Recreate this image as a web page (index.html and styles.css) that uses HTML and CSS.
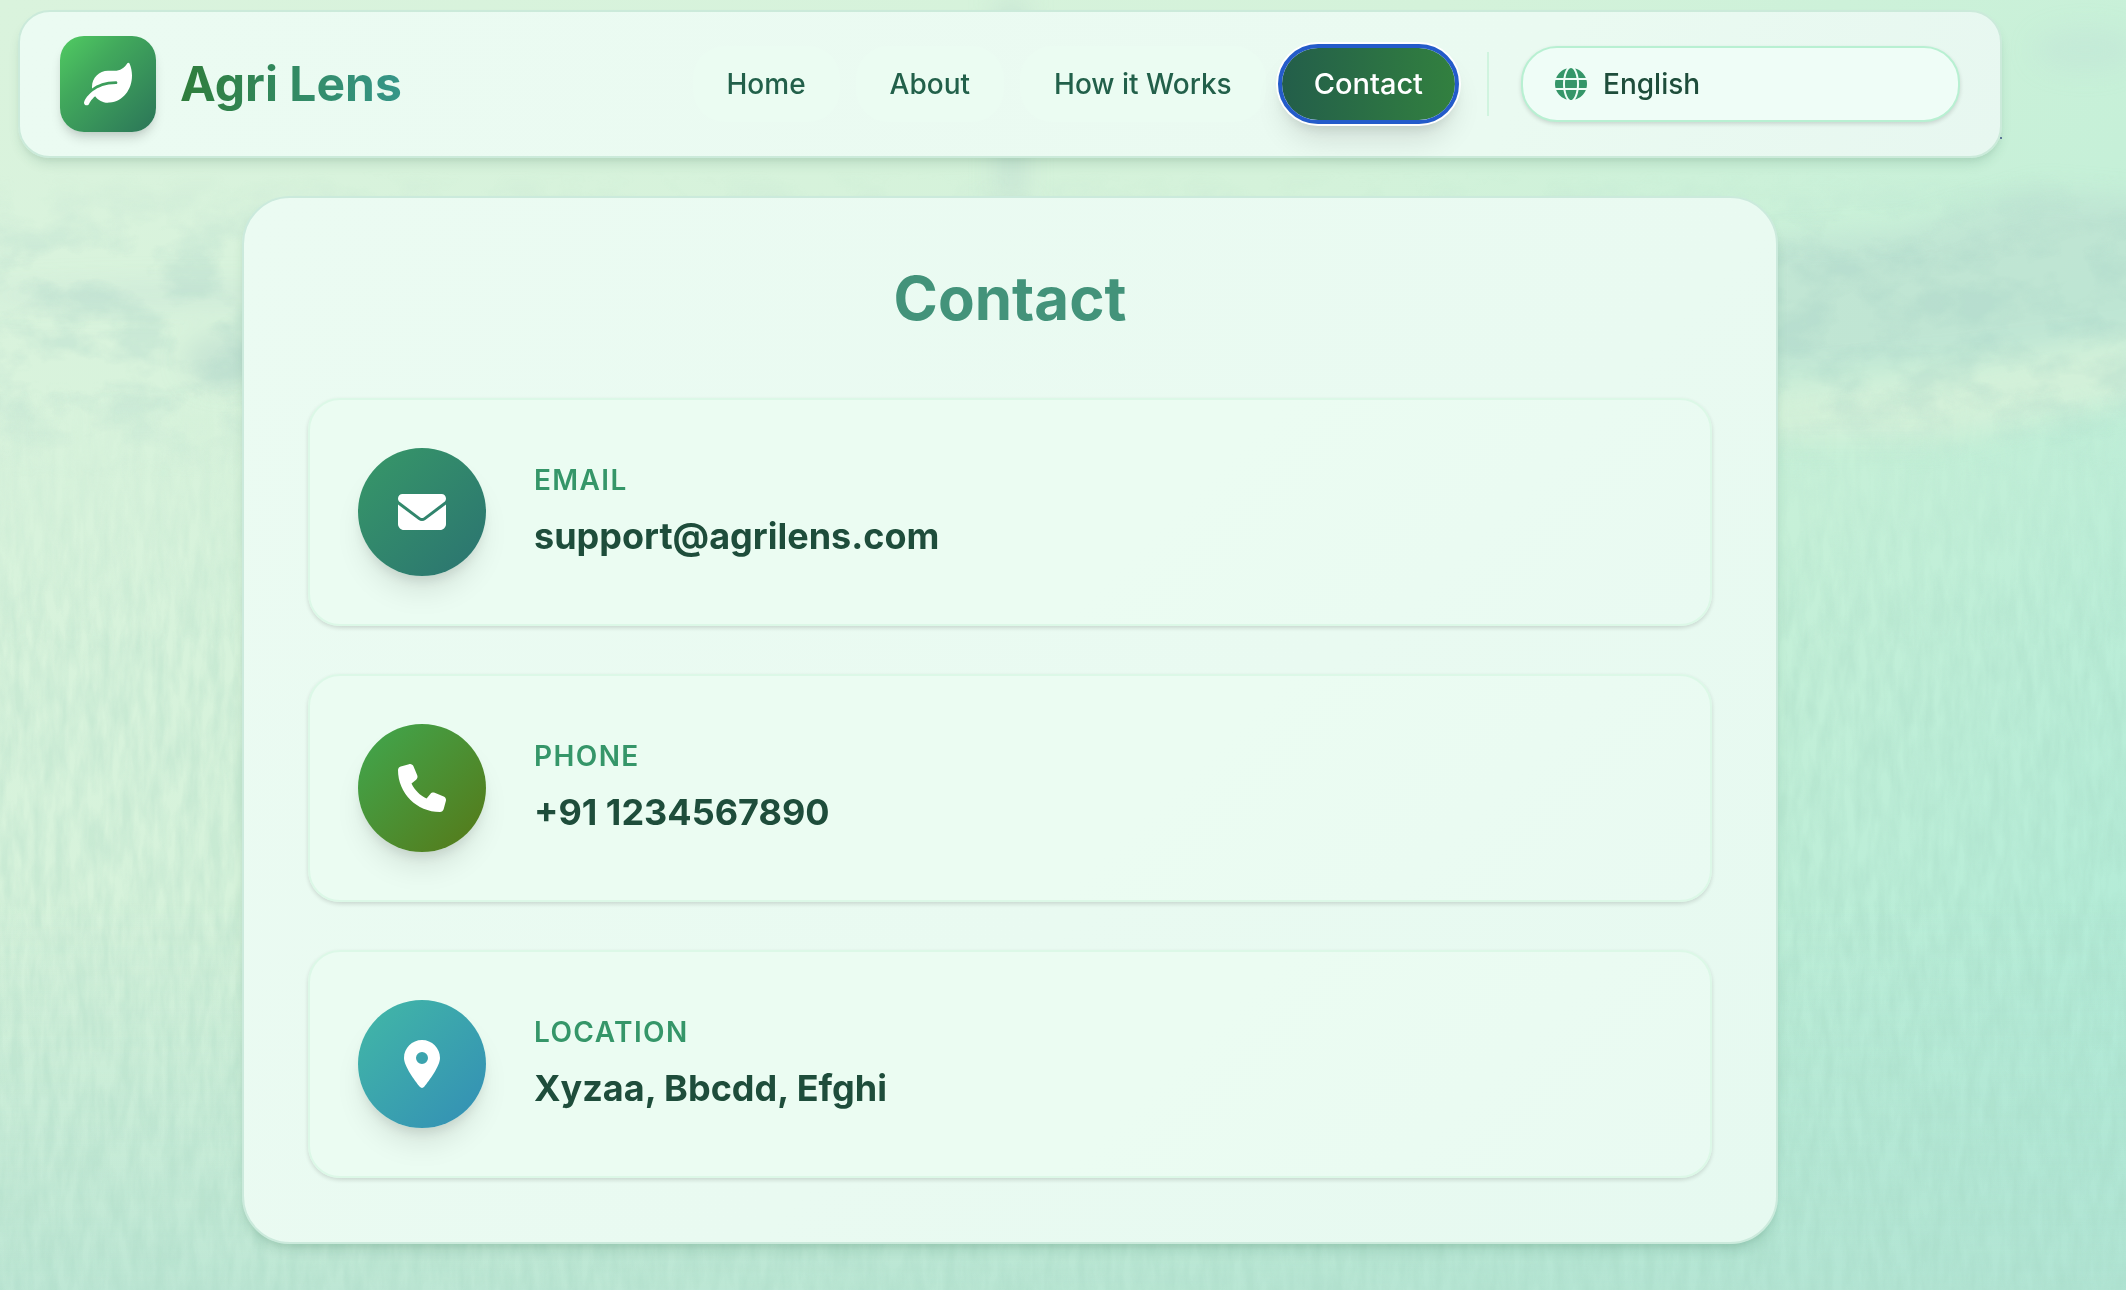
FILE: index.html
```html
<!DOCTYPE html>
<html lang="en">
<head>
<meta charset="utf-8">
<meta name="viewport" content="width=device-width, initial-scale=1">
<title>Agri Lens - Contact</title>
<link rel="stylesheet" href="styles.css">
</head>
<body>
<svg class="scenery" viewBox="0 0 2126 1290" preserveAspectRatio="none" aria-hidden="true">
  <defs>
    <filter id="soft" x="-20%" y="-50%" width="140%" height="200%"><feGaussianBlur stdDeviation="12"/></filter>
    <filter id="grass" x="0" y="0" width="100%" height="100%" color-interpolation-filters="sRGB">
      <feTurbulence type="fractalNoise" baseFrequency="0.09 0.022" numOctaves="3" seed="4"/>
      <feColorMatrix values="0 0 0 0 0.62  0 0 0 0 0.82  0 0 0 0 0.74  2 0 0 0 -0.6"/>
    </filter>
    <filter id="hedge" x="0" y="0" width="100%" height="100%" color-interpolation-filters="sRGB">
      <feTurbulence type="fractalNoise" baseFrequency="0.018 0.028" numOctaves="4" seed="9"/>
      <feColorMatrix values="0 0 0 0 0.62  0 0 0 0 0.8  0 0 0 0 0.76  3 0 0 0 -1.2"/>
    </filter>
    <linearGradient id="fade" x1="0" y1="0" x2="0" y2="1">
      <stop offset="0" stop-color="#000"/>
      <stop offset="0.3" stop-color="#fff"/>
      <stop offset="0.7" stop-color="#fff"/>
      <stop offset="1" stop-color="#000"/>
    </linearGradient>
    <linearGradient id="rise" x1="0" y1="0" x2="0" y2="1">
      <stop offset="0" stop-color="#000"/>
      <stop offset="0.3" stop-color="#fff"/>
    </linearGradient>
    <linearGradient id="ground" x1="0" y1="0" x2="0" y2="1">
      <stop offset="0" stop-color="#b4e2d2" stop-opacity="0"/>
      <stop offset="1" stop-color="#b4e2d2" stop-opacity="0.7"/>
    </linearGradient>
    <mask id="band"><rect y="170" width="2126" height="310" fill="url(#fade)"/></mask>
    <mask id="field"><rect y="380" width="2126" height="910" fill="url(#rise)"/></mask>
  </defs>
  <g filter="url(#soft)">
    <ellipse cx="180" cy="295" rx="200" ry="12" fill="#bcdcd0" opacity="0.35"/>
    <ellipse cx="225" cy="360" rx="40" ry="26" fill="#b8dacd" opacity="0.5"/>
    <path d="M1760 240L1900 232L2040 190L2160 200L2160 330L1960 360L1760 380z" fill="#b9dccf" opacity="0.55"/>
    <ellipse cx="2085" cy="50" rx="50" ry="20" fill="#bfe0d6" opacity="0.4"/>
    <path d="M1760 390L1900 375L2140 335L2140 400L1940 440L1760 440z" fill="#d6f0da" opacity="0.8"/>
    <rect x="996" y="0" width="30" height="200" fill="#bcdcd0" opacity="0.5"/>
  </g>
  <rect y="900" width="2126" height="390" fill="url(#ground)"/>
  <g mask="url(#band)"><rect y="170" width="2126" height="310" filter="url(#hedge)" opacity="0.25"/></g>
  <g mask="url(#field)"><rect y="380" width="2126" height="910" filter="url(#grass)" opacity="0.25"/></g>
</svg>

<div class="shell">
  <header class="topbar">
    <a class="brand" href="#">
      <span class="brand-mark">
        <svg class="glyph" viewBox="0 0 576 512" aria-hidden="true"><path d="M546.200 9.700c-5.600-12.500-21.600-13-28.300-1.200C486.900 62.400 431.400 96 368 96h-80C182 96 96 182 96 288c0 7 .8 13.700 1.500 20.500C161.300 262.800 253.400 224 384 224c8.800 0 16 7.200 16 16s-7.200 16-16 16C132.600 256 26 410.100 2.400 468c-6.600 16.300 1.200 34.900 17.500 41.600 16.400 6.800 35-1.100 41.800-17.300 1.500-3.600 20.900-47.900 71.900-90.600 32.400 43.900 94 85.800 174.900 77.200C465.500 467.500 576 326.700 576 154.300c0-50.200-10.800-102.200-29.800-144.600z"/></svg>
      </span>
      <span class="brand-name">Agri Lens</span>
    </a>
    <nav class="menu">
      <a class="menu-link" href="#">Home</a>
      <a class="menu-link" href="#">About</a>
      <a class="menu-link" href="#">How it Works</a>
      <a class="menu-link current" href="#" aria-current="page">Contact</a>
    </nav>
    <span class="divider"></span>
    <label class="language">
      <svg class="globe" viewBox="0 0 512 512" role="img" aria-label="Language"><path d="M352 256c0 22.2-1.2 43.6-3.3 64H163.3c-2.2-20.4-3.3-41.8-3.3-64s1.2-43.6 3.3-64H348.7c2.2 20.4 3.3 41.8 3.3 64zm28.8-64H503.9c5.3 20.5 8.1 41.9 8.1 64s-2.8 43.5-8.1 64H380.8c2.1-20.6 3.2-42 3.2-64s-1.1-43.4-3.2-64zm112.6-32H376.7c-10-63.9-29.8-117.4-55.3-151.6c78.3 20.7 142 77.5 171.900 151.6zm-149.100 0H167.7c6.1-36.4 15.5-68.6 27-94.7c10.5-23.6 22.2-40.7 33.5-51.5C239.4 3.2 248.7 0 256 0s16.6 3.2 27.8 13.8c11.3 10.8 23 27.9 33.5 51.5c11.6 26 20.9 58.2 27 94.7zm-209 0H18.6C48.6 85.9 112.2 29.1 190.6 8.4C165.1 42.6 145.3 96.1 135.3 160zM8.1 192H131.2c-2.1 20.6-3.2 42-3.2 64s1.1 43.4 3.2 64H8.1C2.8 299.5 0 278.1 0 256s2.8-43.5 8.1-64zM194.7 446.6c-11.6-26-20.9-58.2-27-94.6H344.3c-6.1 36.4-15.5 68.6-27 94.6c-10.5 23.6-22.2 40.7-33.5 51.5C272.6 508.8 263.3 512 256 512s-16.6-3.2-27.8-13.8c-11.3-10.8-23-27.9-33.5-51.5zM135.3 352c10 63.9 29.8 117.4 55.3 151.6C112.2 482.9 48.6 426.1 18.6 352H135.3zm358.1 0c-30 74.1-93.6 130.9-171.9 151.6c25.5-34.2 45.2-87.7 55.3-151.6H493.4z"/></svg>
      <select class="language-select">
        <option>English</option>
      </select>
    </label>
    <span class="speck"></span>
  </header>

  <main class="panel">
    <h1 class="title">Contact</h1>
    <section class="entry">
      <span class="badge email">
        <svg class="glyph" viewBox="0 0 512 512" aria-hidden="true"><path d="M48 64C21.5 64 0 85.5 0 112c0 15.1 7.1 29.3 19.2 38.4L236.8 313.6c11.4 8.5 27 8.5 38.4 0L492.8 150.4c12.1-9.1 19.2-23.3 19.2-38.4c0-26.5-21.5-48-48-48H48zM0 176V384c0 35.3 28.7 64 64 64H448c35.3 0 64-28.7 64-64V176L294.4 339.2c-22.8 17.1-54 17.1-76.8 0L0 176z"/></svg>
      </span>
      <div class="details">
        <h2 class="label">EMAIL</h2>
        <p class="value">support@agrilens.com</p>
      </div>
    </section>
    <section class="entry">
      <span class="badge phone">
        <svg class="glyph" viewBox="0 0 512 512" aria-hidden="true"><path d="M164.900 24.600c-7.700-18.600-28-28.500-47.400-23.200l-88 24C12.100 30.200 0 46 0 64C0 311.400 200.600 512 448 512c18 0 33.800-12.100 38.600-29.500l24-88c5.300-19.400-4.600-39.700-23.200-47.400l-96-40c-16.300-6.800-35.200-2.100-46.300 11.600L304.700 368C234.300 334.700 177.300 277.700 144 207.300L193.300 167c13.700-11.200 18.400-30 11.600-46.300l-40-96z"/></svg>
      </span>
      <div class="details">
        <h2 class="label">PHONE</h2>
        <p class="value">+91 1234567890</p>
      </div>
    </section>
    <section class="entry">
      <span class="badge location">
        <svg class="glyph" viewBox="-64 0 512 512" aria-hidden="true"><path fill-rule="evenodd" d="M215.700 499.200C267 435 384 279.400 384 192C384 86 298 0 192 0S0 86 0 192c0 87.400 117 243 168.300 307.200c12.300 15.300 35.100 15.300 47.400 0zM192 128a64 64 0 1 1 0 128 64 64 0 1 1 0-128z"/></svg>
      </span>
      <div class="details">
        <h2 class="label">LOCATION</h2>
        <p class="value">Xyzaa, Bbcdd, Efghi</p>
      </div>
    </section>
  </main>
</div>
</body>
</html>
```
FILE: styles.css
```css
* {
  box-sizing: border-box;
}

body {
  margin: 0;
  min-height: 100vh;
  font-family: Inter, "Liberation Sans", sans-serif;
  color: #1e4d3b;
  background: linear-gradient(130deg, #daf3dd 0%, #d4f2da 45%, #c6f0d8 70%, #abead7 100%);
}

.scenery {
  position: fixed;
  inset: 0;
  z-index: -1;
  width: 100%;
  height: 100%;
}

.shell {
  display: flex;
  flex-direction: column;
  gap: 38px;
  padding: 10px 124px 40px 18px;
}

.topbar {
  position: relative;
  display: flex;
  align-items: center;
  padding: 24px 40px;
  border: 2px solid #cbeada;
  border-radius: 32px;
  background: linear-gradient(120deg, #ebfbf2 0%, #eafaf1 75%, #e7f7f0 100%);
  box-shadow: 0 8px 12px -2px rgba(20, 90, 60, 0.13), 0 4px 8px -4px rgba(20, 90, 60, 0.1);
}

.brand {
  display: flex;
  align-items: center;
  gap: 24px;
  text-decoration: none;
}

.brand-mark {
  display: grid;
  place-items: center;
  width: 96px;
  height: 96px;
  border-radius: 24px;
  background: linear-gradient(135deg, #51cc62 0%, #41a85c 35%, #2b7558 100%);
  box-shadow: 0 8px 12px -2px rgba(0, 0, 0, 0.14), 0 4px 8px -4px rgba(0, 0, 0, 0.1);
}

.glyph {
  width: 48px;
  height: 48px;
  fill: #fff;
}

.brand-name {
  font-size: 48px;
  line-height: 64px;
  font-weight: 700;
  color: transparent;
  background: linear-gradient(90deg, #2f7d3b, #369689);
  background-clip: text;
}

.menu {
  display: flex;
  align-items: center;
  gap: 16px;
  margin-left: auto;
}

.menu-link {
  padding: 18px 34px;
  border-radius: 32px;
  font-size: 28px;
  line-height: 40px;
  font-weight: 500;
  color: #22604a;
  text-decoration: none;
  background: #ebfcf2;
}

.current {
  margin-left: -4px;
  padding: 16px 32px;
  border: 4px solid #245bca;
  border-radius: 40px;
  font-size: 29px;
  color: #fff;
  background: linear-gradient(90deg, #235e4a, #32803f) padding-box;
  box-shadow: 0 0 0 2px #fff, 0 20px 30px -6px rgba(0, 0, 0, 0.12), 0 8px 12px -4px rgba(0, 0, 0, 0.1);
}

.divider {
  width: 2px;
  height: 64px;
  margin: 0 32px 0 28px;
  background: #d0f4df;
}

.language {
  display: flex;
  align-items: center;
  gap: 16px;
  width: 439px;
  height: 76px;
  padding: 0 32px;
  border: 2px solid #b8f0d2;
  border-radius: 36px;
  background: #effdf7;
  box-shadow: 0 2px 4px rgba(0, 0, 0, 0.14);
}

.globe {
  width: 32px;
  height: 32px;
  fill: #359669;
}

.language-select {
  flex: 1;
  padding: 0;
  border: 0;
  appearance: none;
  background: none;
  font: 500 28px/40px Inter, "Liberation Sans", sans-serif;
  color: #1e4d3b;
}

.speck {
  position: absolute;
  right: -2px;
  bottom: 17px;
  width: 2px;
  height: 2px;
  background: #5b7796;
}

.panel {
  display: flex;
  flex-direction: column;
  gap: 48px;
  width: 100%;
  max-width: 1536px;
  margin: 0 auto;
  padding: 64px;
  border: 2px solid #cbeadc;
  border-radius: 48px;
  background: linear-gradient(135deg, #ebfbf2 0%, #e9faf1 60%, #e6f9f0 100%);
  box-shadow: 0 8px 12px -2px rgba(20, 90, 60, 0.14), 0 4px 8px -4px rgba(20, 90, 60, 0.1);
}

.title {
  margin: 0 0 16px;
  font-size: 60px;
  line-height: 72px;
  font-weight: 700;
  text-align: center;
  color: #43937a;
}

.entry {
  display: flex;
  align-items: center;
  gap: 48px;
  padding: 48px;
  border: 2px solid #dcf8e7;
  border-radius: 32px;
  background: linear-gradient(135deg, #ebfcf2 0%, #ebfcf2 60%, #e9faf2 100%);
  box-shadow: 0 2px 4px rgba(0, 0, 0, 0.14);
}

.badge {
  display: grid;
  place-items: center;
  width: 128px;
  height: 128px;
  border-radius: 50%;
  box-shadow: 0 20px 30px -6px rgba(0, 0, 0, 0.1), 0 8px 12px -4px rgba(0, 0, 0, 0.1);
}

.email {
  background: linear-gradient(135deg, #379868, #2b7371);
}

.phone {
  background: linear-gradient(135deg, #40a84f, #567817);
}

.location {
  background: linear-gradient(135deg, #42b8a6, #338eb6);
}

.details {
  display: flex;
  flex-direction: column;
  gap: 8px;
}

.label {
  margin: 0;
  font-size: 28px;
  line-height: 40px;
  font-weight: 600;
  letter-spacing: 0.05em;
  color: #359669;
}

.value {
  margin: 0;
  font-size: 36px;
  line-height: 56px;
  font-weight: 700;
}
```
